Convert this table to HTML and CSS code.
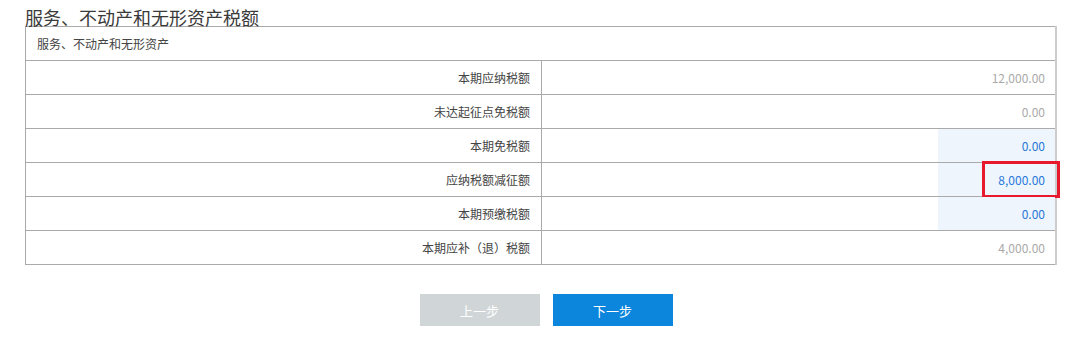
FILE: index.html
```html
<!DOCTYPE html>
<html lang="zh-CN">
<head>
    <meta charset="UTF-8">
    <meta name="viewport" content="width=device-width, initial-scale=1.0">
    <title>服务、不动产和无形资产税额</title>
    <link rel="stylesheet" href="styles.css">
</head>
<body>
    <main class="page">
        <h2 class="section-title">服务、不动产和无形资产税额</h2>

        <table class="tax-table">
            <tr class="group-row">
                <td colspan="2">服务、不动产和无形资产</td>
            </tr>
            <tr>
                <td class="label">本期应纳税额</td>
                <td class="amount"><div class="value">12,000.00</div></td>
            </tr>
            <tr>
                <td class="label">未达起征点免税额</td>
                <td class="amount"><div class="value">0.00</div></td>
            </tr>
            <tr>
                <td class="label">本期免税额</td>
                <td class="amount"><div class="value editable">0.00</div></td>
            </tr>
            <tr>
                <td class="label">应纳税额减征额</td>
                <td class="amount">
                    <div class="value editable">8,000.00</div>
                    <span class="mark"></span>
                </td>
            </tr>
            <tr>
                <td class="label">本期预缴税额</td>
                <td class="amount"><div class="value editable">0.00</div></td>
            </tr>
            <tr>
                <td class="label">本期应补（退）税额</td>
                <td class="amount"><div class="value">4,000.00</div></td>
            </tr>
        </table>

        <div class="actions">
            <button class="btn btn-prev" type="button">上一步</button>
            <button class="btn btn-next" type="button">下一步</button>
        </div>
    </main>
</body>
</html>
```

FILE: styles.css
```css
body {
    margin: 0;
    background: #fff;
    font-family: "Noto Sans CJK SC", "Liberation Sans", sans-serif;
    color: #333;
}

.page {
    padding-left: 25px;
    width: 1032px;
}

.section-title {
    margin: 0;
    padding-top: 9px;
    font-size: 18px;
    font-weight: normal;
    line-height: 17px;
    color: #3a3a3a;
    position: relative;
    z-index: 1;
}

.tax-table {
    width: 1032px;
    border-collapse: collapse;
    font-size: 12px;
    border-right: 2px solid #ccc;
}

.tax-table td {
    border: 1px solid #aaa;
    height: 33px;
    padding: 0;
}

.group-row td {
    padding-left: 11px;
    color: #444;
}

.label {
    width: 504px;
    text-align: right;
    padding-right: 11px !important;
    color: #444;
}

.amount {
    position: relative;
}

.value {
    width: 107px;
    height: 33px;
    line-height: 33px;
    margin-left: auto;
    padding-right: 10px;
    text-align: right;
    color: #aaa;
}

.value.editable {
    background: #eef5fd;
    color: #2a78d8;
}

/* red highlight frame around one amount */
.mark {
    position: absolute;
    top: -2px;
    bottom: -2px;
    right: -5px;
    width: 72px;
    border: 3px solid #e8192c;
}

.actions {
    display: flex;
    justify-content: center;
    gap: 13px;
    margin-top: 29px;
    padding-left: 10px;
}

.btn {
    width: 120px;
    height: 32px;
    border: none;
    font-family: inherit;
    font-size: 13px;
    color: #fff;
}

.btn-prev {
    background: #d0d6d8;
}

.btn-next {
    background: #0c85dc;
}
```
